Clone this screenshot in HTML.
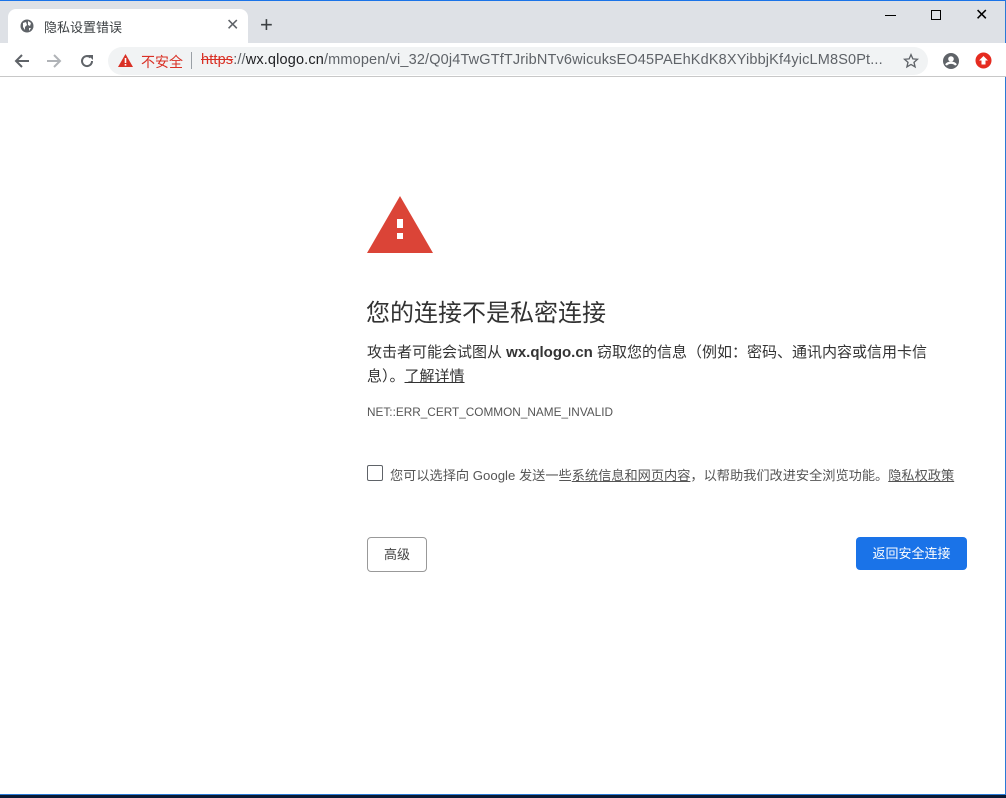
<!DOCTYPE html>
<html><head><meta charset="utf-8"><style>
*{margin:0;padding:0;box-sizing:border-box}
body{width:1006px;height:798px;overflow:hidden;background:#fff;font-family:"Liberation Sans","Noto Sans CJK SC",sans-serif;position:relative}
.abs{position:absolute}
</style></head><body>
<div class="abs" style="left:0;top:0;width:1006px;height:43px;background:#dee1e6;border-top:1px solid #1a73e8"></div>
<div class="abs" style="right:0;top:0;width:1px;height:798px;background:#2a7ad6"></div>
<!-- tab -->
<div class="abs" style="left:8px;top:9px;width:240px;height:36px;background:#fff;border-radius:8px 8px 0 0"></div>
<svg class="abs" style="left:20px;top:19px" width="14" height="14" viewBox="0 0 14 14"><circle cx="7" cy="7" r="6.5" fill="#5f6368"/><path d="M3 4 L6 3 L7 6 L5 8 L5 11 L3 8Z M8 2 L11 4 L10 7 L8 6Z M9 9 L11 9 L9 12Z" fill="#fff"/></svg>
<div class="abs" style="left:44px;top:17px;font-size:13px;color:#3c4043">隐私设置错误</div>
<div class="abs" style="left:226px;top:15px;font-size:16px;color:#5f6368">✕</div>
<div class="abs" style="left:260px;top:12px;font-size:22px;color:#3c4043">+</div>
<!-- window controls -->
<div class="abs" style="left:885px;top:15px;width:11px;height:1px;background:#000"></div>
<div class="abs" style="left:931px;top:10px;width:10px;height:10px;border:1px solid #000"></div>
<div class="abs" style="left:975px;top:5px;font-size:16px;color:#000">✕</div>
<!-- toolbar -->
<div class="abs" style="left:0;top:43px;width:1006px;height:34px;background:#fff;border-bottom:1px solid #c8c8c8"></div>
<svg class="abs" style="left:13px;top:52px" width="18" height="18" viewBox="0 0 18 18"><path d="M16 9H4M9 3L3 9l6 6" stroke="#5f6368" stroke-width="2" fill="none"/></svg>
<svg class="abs" style="left:45px;top:52px" width="18" height="18" viewBox="0 0 18 18"><path d="M2 9h12M9 3l6 6-6 6" stroke="#b0b3b7" stroke-width="2" fill="none"/></svg>
<svg class="abs" style="left:78px;top:52px" width="18" height="18" viewBox="0 0 18 18"><path d="M14 9a5 5 0 1 1-1.5-3.5" stroke="#5f6368" stroke-width="2" fill="none"/><path d="M10 3h5v5z" fill="#5f6368"/></svg>
<div class="abs" style="left:108px;top:47px;width:820px;height:28px;background:#f1f3f4;border-radius:14px"></div>
<svg class="abs" style="left:118px;top:54px" width="15" height="13" viewBox="0 0 15 13"><path d="M7.5 0L15 13H0Z" fill="#d93025"/><rect x="6.7" y="4" width="1.6" height="5" fill="#fff"/><rect x="6.7" y="10" width="1.6" height="1.6" fill="#fff"/></svg>
<div class="abs" style="left:141px;top:52px;font-size:14px;color:#d93025">不安全</div>
<div class="abs" style="left:191px;top:52px;width:1px;height:17px;background:#9aa0a6"></div>
<div class="abs" style="left:201px;top:52px;font-size:14.5px;color:#5f6368;white-space:nowrap;letter-spacing:0.15px"><span style="color:#d93025;text-decoration:line-through">https</span>://<span style="color:#202124">wx.qlogo.cn</span>/mmopen/vi_32/Q0j4TwGTfTJribNTv6wicuksEO45PAEhKdK8XYibbjKf4yicLM8S0Pt...</div>
<svg class="abs" style="left:903px;top:53px" width="16" height="16" viewBox="0 0 24 24"><path d="M12 2.5l2.8 6.3 6.9.6-5.2 4.6 1.6 6.8L12 17.2l-6.1 3.6 1.6-6.8-5.2-4.6 6.9-.6z" fill="none" stroke="#5f6368" stroke-width="2"/></svg>
<svg class="abs" style="left:942px;top:52px" width="18" height="18" viewBox="0 0 18 18"><circle cx="9" cy="9" r="8" fill="#5f6368"/><circle cx="9" cy="7" r="2.8" fill="#fff"/><path d="M4 13c2-3 8-3 10 0" stroke="#fff" stroke-width="2.2" fill="none"/></svg>
<svg class="abs" style="left:975px;top:52px" width="17" height="17" viewBox="0 0 17 17"><circle cx="8.5" cy="8.5" r="8" fill="#e52b20"/><path d="M8.5 4L13 8.5H10.5V12.5H6.5V8.5H4Z" fill="#fff"/></svg>
<!-- content -->
<svg class="abs" style="left:367px;top:196px" width="66" height="57" viewBox="0 0 66 57"><path d="M33 0L66 57H0Z" fill="#db4437"/><rect x="30" y="23" width="6" height="9" fill="#fff"/><rect x="30" y="37" width="6" height="6" fill="#fff"/></svg>
<div class="abs" style="left:366px;top:293px;font-size:24px;color:#333">您的连接不是私密连接</div>
<div class="abs" style="left:367px;top:341px;font-size:15px;color:#333;line-height:24px;width:620px;white-space:nowrap">攻击者可能会试图从 <b>wx.qlogo.cn</b> 窃取您的信息（例如：密码、通讯内容或信用卡信<br>息）。<span style="text-decoration:underline">了解详情</span></div>
<div class="abs" style="left:367px;top:405px;font-size:11.8px;color:#555">NET::ERR_CERT_COMMON_NAME_INVALID</div>
<div class="abs" style="left:367px;top:465px;width:16px;height:16px;border:1.5px solid #5f6368;border-radius:2px"></div>
<div class="abs" style="left:390px;top:465px;font-size:13.2px;color:#555;white-space:nowrap">您可以选择向 Google 发送一些<u>系统信息和网页内容</u>，以帮助我们改进安全浏览功能。<u>隐私权政策</u></div>
<div class="abs" style="left:367px;top:537px;width:60px;height:35px;border:1px solid #999;border-radius:4px;font-size:13px;color:#444;text-align:center;line-height:33px">高级</div>
<div class="abs" style="left:856px;top:537px;width:111px;height:33px;background:#1a73e8;border-radius:4px;font-size:13px;color:#fff;text-align:center;line-height:33px">返回安全连接</div>
<div class="abs" style="left:0;top:794px;width:1006px;height:1px;background:#2a7ad6"></div>
<div class="abs" style="left:0;top:795px;width:1006px;height:3px;background:#0b1a33"></div>
</body></html>
